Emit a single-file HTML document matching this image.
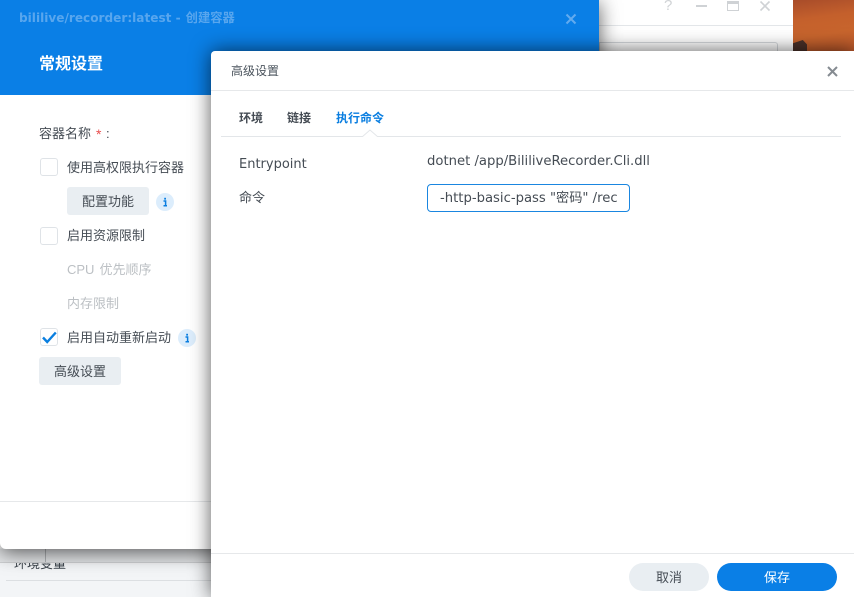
<!DOCTYPE html>
<html><head><meta charset="utf-8">
<style>
html,body{margin:0;padding:0}
body{width:854px;height:597px;overflow:hidden;position:relative;background:#fff;font-family:"Liberation Sans","Noto Sans CJK SC",sans-serif;color:#454c54;font-size:13px}
.a{position:absolute;white-space:nowrap;line-height:18px}
.box{position:absolute;box-sizing:border-box}
.cb{position:absolute;left:40px;width:18px;height:18px;box-sizing:border-box;border:1px solid #dfe3e7;border-radius:3px;background:#fff}
.btn{position:absolute;background:#e9eef2;border-radius:3px;text-align:center;color:#454c54}
.i{position:absolute}
</style></head><body>
<!-- background window -->
<div class="box" style="left:599px;top:0;width:194px;height:597px;background:#fff"></div>
<div class="box" style="left:793px;top:0;width:61px;height:51px;background:linear-gradient(172deg,#a84c2a,#c4602c 35%,#c8652d 65%,#b8562a)"></div>
<div class="box" style="left:793px;top:40px;width:14px;height:11px;background:#4a3028;clip-path:polygon(0 30%,70% 0,100% 40%,100% 100%,0 100%)"></div>
<div class="box" style="left:599px;top:25px;width:194px;height:1px;background:#e3e6e9"></div>
<div class="box" style="left:599px;top:42px;width:179px;height:9px;border:1px solid #d5d9dd;border-bottom:0;border-radius:0 3px 0 0;background:#fff"></div>
<div class="a" style="left:664px;top:-3px;font-size:15px;color:#d0d3d6">?</div>
<div class="box" style="left:696px;top:5px;width:11px;height:2px;background:#cfd2d5"></div>
<div class="box" style="left:727px;top:1px;width:12px;height:10px;border:1px solid #cfd2d5;border-top:3px solid #cfd2d5"></div>
<svg class="box" style="left:759px;top:0" width="12" height="12"><path d="M1.5 1.5L10.5 10.5M10.5 1.5L1.5 10.5" stroke="#cfd2d5" stroke-width="1.6"/></svg>

<!-- bottom of underlying window -->
<div class="box" style="left:0;top:548px;width:211px;height:49px;background:#f3f5f7"></div>
<div class="a" style="left:14px;top:555px;color:#3c444c">环境变量</div>
<div class="box" style="left:6px;top:580px;width:205px;height:1px;background:#dcdfe2"></div>
<div class="box" style="left:0;top:549px;width:211px;height:13px;background:#e4e6e8"></div>
<div class="box" style="left:45px;top:549px;width:1px;height:13px;background:#b0b3b6"></div>
<div class="box" style="left:0;top:562px;width:211px;height:1px;background:#cfd1d3"></div>

<!-- main dialog -->
<div class="box" style="left:0;top:0;width:599px;height:549px;background:#fff;border-radius:0 0 0 6px;box-shadow:0 3px 20px rgba(0,0,0,.65)">
  <div class="box" style="left:0;top:0;width:599px;height:95px;background:#0a7fe6"></div>
  <div class="a" style="left:19px;top:9px;font-family:'DejaVu Sans','Noto Sans CJK SC',sans-serif;font-weight:bold;font-size:12.1px;color:#58a6ee">bililive/recorder:latest -<span style="font-size:12.3px;margin-left:5px">创建容器</span></div>
  <svg class="box" style="left:565px;top:13px" width="12" height="12"><path d="M1.5 1.5L10.5 10.5M10.5 1.5L1.5 10.5" stroke="#62abef" stroke-width="2"/></svg>
  <div class="a" style="left:39px;top:54px;font-size:16px;line-height:22px;font-weight:bold;color:#fff">常规设置</div>
  <div class="a" style="left:39px;top:125px">容器名称</div>
  <div class="a" style="left:96px;top:125px;color:#e84d4d;font-size:14px">*</div>
  <div class="a" style="left:106px;top:125px">:</div>
  <div class="cb" style="top:158px"></div>
  <div class="a" style="left:67px;top:159px">使用高权限执行容器</div>
  <div class="btn" style="left:67px;top:187px;width:82px;height:28px;line-height:30px">配置功能</div>
  <svg class="i" style="left:156px;top:193px" width="18" height="18"><circle cx="9" cy="9" r="9" fill="#dcedfc"/><path d="M7.5 8H9.6V12.5M7.5 12.8H11" fill="none" stroke="#0a7ee0" stroke-width="1.5"/><rect x="8.2" y="4.8" width="1.8" height="1.8" fill="#0a7ee0"/></svg>
  <div class="cb" style="top:227px"></div>
  <div class="a" style="left:67px;top:227px">启用资源限制</div>
  <div class="a" style="left:67px;top:261px;color:#bcc0c4"><span style="font-size:13px;margin-right:5px">CPU</span>优先顺序</div>
  <div class="a" style="left:67px;top:295px;color:#bcc0c4">内存限制</div>
  <div class="cb" style="top:328px"></div>
  <svg class="box" style="left:40px;top:328px" width="18" height="18"><path d="M3 9.5L7.2 14L15.8 4.5" fill="none" stroke="#0a7fe0" stroke-width="2.4"/></svg>
  <div class="a" style="left:67px;top:329px">启用自动重新启动</div>
  <svg class="i" style="left:178px;top:329px" width="18" height="18"><circle cx="9" cy="9" r="9" fill="#dcedfc"/><path d="M7.5 8H9.6V12.5M7.5 12.8H11" fill="none" stroke="#0a7ee0" stroke-width="1.5"/><rect x="8.2" y="4.8" width="1.8" height="1.8" fill="#0a7ee0"/></svg>
  <div class="btn" style="left:39px;top:357px;width:82px;height:28px;line-height:30px">高级设置</div>
  <div class="box" style="left:0;top:501px;width:599px;height:1px;background:#e6e8ea"></div>
</div>

<!-- front dialog -->
<div class="box" style="left:211px;top:51px;width:643px;height:546px;background:#fff;border-radius:4px 0 0 0;box-shadow:0 0 20px rgba(0,0,0,.65)">
  <div class="a" style="left:20px;top:11px;font-size:12px;color:#4a535c">高级设置</div>
  <svg class="box" style="left:616px;top:15px" width="11" height="11"><path d="M1 1L10 10M10 1L1 10" stroke="#858b91" stroke-width="2"/></svg>
  <div class="box" style="left:0;top:39px;width:643px;height:1px;background:#e6e8ea"></div>
  <div class="a" style="left:28px;top:58px;font-size:12px;font-weight:bold;color:#454c54">环境</div>
  <div class="a" style="left:76px;top:58px;font-size:12px;font-weight:bold;color:#454c54">链接</div>
  <div class="a" style="left:125px;top:58px;font-size:12px;font-weight:bold;color:#0a7ee0">执行命令</div>
  <div class="box" style="left:10px;top:85px;width:620px;height:1px;background:#e3e6e9"></div>
  <svg class="box" style="left:151px;top:78px" width="16" height="8"><path d="M0 8L8 1L16 8" fill="#fff" stroke="#e3e6e9"/></svg>
  <div class="a" style="left:28px;top:105px;font-family:'DejaVu Sans',sans-serif;font-size:13px">Entrypoint</div>
  <div class="a" style="left:28px;top:138px">命令</div>
  <div class="a" style="left:216px;top:102px;font-family:'DejaVu Sans',sans-serif;font-size:13.2px">dotnet /app/BililiveRecorder.Cli.dll</div>
  <div class="box" style="left:216px;top:133px;width:203px;height:28px;border:1px solid #1a86e0;border-radius:4px;background:#fff;overflow:hidden">
    <div class="a" style="left:12px;top:5px;width:178px;overflow:hidden;font-family:'DejaVu Sans','Noto Sans CJK SC',sans-serif;font-size:13.2px">-http-basic-pass "密码" /rec</div>
  </div>
  <div class="box" style="left:0;top:502px;width:643px;height:1px;background:#e6e8ea"></div>
  <div class="btn" style="left:418px;top:512px;width:80px;height:28px;line-height:30px;border-radius:14px">取消</div>
  <div class="btn" style="left:506px;top:512px;width:120px;height:28px;line-height:30px;border-radius:14px;background:#0a7fe6;color:#fff">保存</div>
</div>
</body></html>
